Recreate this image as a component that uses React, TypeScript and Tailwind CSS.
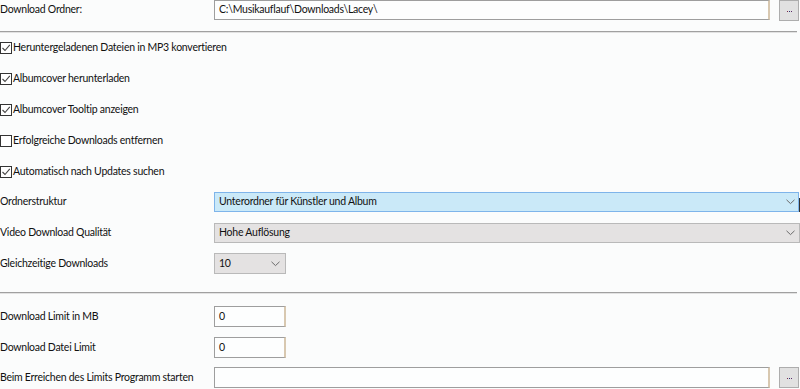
import React from "react";

const font = { fontFamily: 'Lato, "Noto Sans", sans-serif' };

function Chevron() {
  return (
    <svg width="9" height="6" viewBox="0 0 9 6" className="shrink-0">
      <path d="M0.5 0.8 L4.5 4.6 L8.5 0.8" fill="none" stroke="#6b6b6b" strokeWidth="1" />
    </svg>
  );
}

function Check({ checked }: { checked: boolean }) {
  return (
    <div className="w-[12px] h-[12px] border border-[#333333] bg-white flex items-center justify-center shrink-0">
      {checked && (
        <svg width="10" height="10" viewBox="0 0 10 10">
          <path d="M1.5 5 L4 7.5 L8.8 1.8" fill="none" stroke="#444444" strokeWidth="1.1" />
        </svg>
      )}
    </div>
  );
}

function DotsButton() {
  return (
    <div className="w-[20px] h-[21px] bg-[#e1e1e1] border border-[#adadad] flex items-center justify-center gap-[1px] pt-[2px] shrink-0">
      <div className="w-[1px] h-[1px] bg-[#7a2a4a]" />
      <div className="w-[1px] h-[1px] bg-[#2a3a7a]" />
      <div className="w-[1px] h-[1px] bg-[#5a2a6a]" />
    </div>
  );
}

function TextBox({ value, w }: { value?: string; w?: string }) {
  return (
    <div
      className={`h-full bg-[#fdfefe] border-t border-l border-b border-[#9e9e9e] border-r-2 border-r-[#d8c8b0] flex items-center pl-[4px] whitespace-nowrap ${w ?? "flex-1"}`}
    >
      {value}
    </div>
  );
}

function Separator() {
  return (
    <div className="w-[797px]">
      <div className="h-px bg-[#a0a0a0]" />
      <div className="h-px bg-[#e2e2e2]" />
    </div>
  );
}

export default function App() {
  const checks: [string, boolean][] = [
    ["Heruntergeladenen Dateien in MP3 konvertieren", true],
    ["Albumcover herunterladen", true],
    ["Albumcover Tooltip anzeigen", true],
    ["Erfolgreiche Downloads entfernen", false],
    ["Automatisch nach Updates suchen", true],
  ];
  return (
    <div style={font} className="w-[800px] h-[389px] bg-[#fbfcfc] text-[10.5px] tracking-[-0.25px] text-[#111] overflow-hidden whitespace-nowrap">
      <div className="flex items-center h-[20px]">
        <div className="w-[214px] shrink-0">Download Ordner:</div>
        <TextBox value="C:\Musikauflauf\Downloads\Lacey\" />
        <div className="w-[9px] shrink-0" />
        <DotsButton />
        <div className="w-[1px] shrink-0" />
      </div>
      <div className="h-[11px]" />
      <Separator />
      {checks.map(([label, c], i) => (
        <div key={i} className="flex items-center h-[31px] gap-[1px] -mt-[1px] mb-[1px]">
          <Check checked={c} />
          <span>{label}</span>
        </div>
      ))}
      <div className="h-[4px]" />
      <div className="flex items-center h-[20px]">
        <div className="w-[214px] shrink-0">Ordnerstruktur</div>
        <div className="flex-1 h-full bg-[#cae9f8] border border-[#7eb4ea] flex items-center pl-[4px] pr-[3px] justify-between">
          <span>Unterordner für Künstler und Album</span>
          <Chevron />
        </div>
        <div className="w-[1px] h-[14px] bg-[#333] self-end" />
      </div>
      <div className="h-[11px]" />
      <div className="flex items-center h-[20px]">
        <div className="w-[214px] shrink-0">Video Download Qualität</div>
        <div className="flex-1 h-full bg-[#e4e2e2] border border-[#b9b9b9] flex items-center pl-[4px] pr-[4px] justify-between">
          <span>Hohe Auflösung</span>
          <Chevron />
        </div>
      </div>
      <div className="h-[10px]" />
      <div className="flex items-center h-[21px]">
        <div className="w-[214px] shrink-0">Gleichzeitige Downloads</div>
        <div className="w-[72px] h-full bg-[#e4e2e2] border border-[#b9b9b9] flex items-center pl-[4px] pr-[5px] justify-between">
          <span>10</span>
          <Chevron />
        </div>
      </div>
      <div className="h-[18px]" />
      <Separator />
      <div className="h-[12px]" />
      <div className="flex items-center h-[21px]">
        <div className="w-[214px] shrink-0">Download Limit in MB</div>
        <TextBox value="0" w="w-[72px]" />
      </div>
      <div className="h-[10px]" />
      <div className="flex items-center h-[21px]">
        <div className="w-[214px] shrink-0">Download Datei Limit</div>
        <TextBox value="0" w="w-[72px]" />
      </div>
      <div className="h-[9px]" />
      <div className="flex items-center h-[21px]">
        <div className="w-[214px] shrink-0">Beim Erreichen des Limits Programm starten</div>
        <TextBox />
        <div className="w-[9px] shrink-0" />
        <DotsButton />
        <div className="w-[1px] shrink-0" />
      </div>
    </div>
  );
}
